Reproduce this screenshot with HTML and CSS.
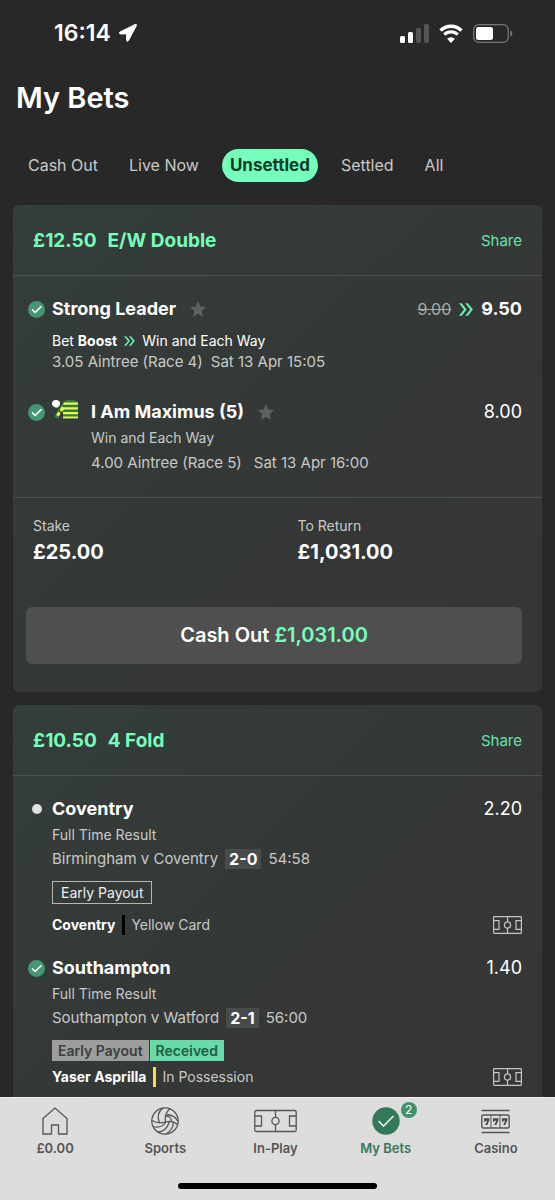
FILE: index.html
```html
<!DOCTYPE html>
<html lang="en">
<head>
<meta charset="utf-8">
<meta name="viewport" content="width=device-width, initial-scale=1">
<title>My Bets</title>
<link rel="stylesheet" href="styles.css">
</head>
<body>
<svg class="defs" aria-hidden="true">
  <symbol id="tick" viewBox="0 0 17 17"><circle cx="8.500" cy="8.500" r="8.500" fill="#459673"/><path d="M4 8.400l3.100 3.100 6.300-6.100" fill="none" stroke="#fff" stroke-width="1.500"/></symbol>
  <symbol id="star" viewBox="0 0 16 16"><path d="M8 0l2.300 5.400 5.700.6-4.300 3.900L13 16l-5-3.200L3 16l1.300-6.100L0 6l5.700-.6z" fill="#5f6261"/></symbol>
  <symbol id="boost" viewBox="0 0 14 13"><path d="M0 .3h2.700l5 6.200-5 6.200H0l5-6.200zM6.200.3h2.700l5 6.200-5 6.200H6.200l5-6.200z" fill="#68f0b2"/></symbol>
  <symbol id="pitch" viewBox="0 0 29 18"><g fill="none" stroke="#c4c7c6" stroke-width="1.200"><rect x=".6" y=".6" width="27.800" height="16.800" rx=".8"/><path d="M.6 4.600h5.400v8.800H.6M28.400 4.600H23v8.800h5.400M14.500.6v5.200M14.500 12.200v5.200"/><circle cx="14.500" cy="9" r="3.100"/></g></symbol>
</svg>

<header class="status">
  <div class="status-time">16:14
    <svg width="18" height="18" viewBox="0 0 18 18"><path d="M16.300.4 1 8c-1 .6-.6 1.900.4 1.900h6.200v6.300c0 1.200 1.400 1.400 1.900.4L17.400 1.500c.4-.8-.3-1.500-1.100-1.100z" fill="#fff" stroke="#fff"/></svg>
  </div>
  <div class="status-icons">
    <svg width="29" height="19" viewBox="0 0 29 19"><rect y="12" width="5" height="7" rx="1.500" fill="#fff"/><rect x="8" y="8" width="5" height="11" rx="1.500" fill="#fff"/><rect x="16" y="4" width="5" height="15" rx="1.500" fill="#555"/><rect x="24" width="5" height="19" rx="1.500" fill="#555"/></svg>
    <svg width="24" height="19" viewBox="0 0 24 19"><path d="M1.500 6.500a15 15 0 0 1 21 0" fill="none" stroke="#fff" stroke-width="3.400"/><path d="M5.300 10.600a9.600 9.600 0 0 1 13.400 0" fill="none" stroke="#fff" stroke-width="3.200"/><path d="M12 19l-3.900-4.300a5.800 5.800 0 0 1 7.800 0z" fill="#fff"/></svg>
    <svg width="40" height="19" viewBox="0 0 40 19"><rect x=".7" y=".7" width="34.600" height="17.600" rx="5" fill="none" stroke="#777" stroke-width="1.300"/><rect x="3" y="3" width="17" height="13" rx="2.500" fill="#fff"/><path d="M37.300 6.500c2.700.8 2.700 5.200 0 6z" fill="#777"/></svg>
  </div>
</header>

<main class="page">
  <h1 class="title">My Bets</h1>
  <nav class="tabs" aria-label="Bet filters">
    <button class="tab">Cash Out</button>
    <button class="tab">Live Now</button>
    <button class="tab tab-active" aria-pressed="true">Unsettled</button>
    <button class="tab">Settled</button>
    <button class="tab">All</button>
  </nav>

  <article class="card">
    <header class="card-head">
      <h2 class="card-title"><span>£12.50</span><span>E/W Double</span></h2>
      <button class="share">Share</button>
    </header>
    <div class="legs legs-racing">
      <section class="leg">
        <div class="mark"><svg width="17" height="17"><use href="#tick"/></svg></div>
        <div class="leg-body">
          <div class="leg-top">
            <h3 class="name">Strong Leader <svg width="16" height="16"><use href="#star"/></svg></h3>
            <div class="odds"><s class="old">9.00</s><svg width="14" height="13"><use href="#boost"/></svg><b>9.50</b></div>
          </div>
          <p class="line boosted"><span>Bet <b>Boost</b></span><svg width="11" height="10"><use href="#boost"/></svg><span>Win and Each Way</span></p>
          <p class="event"><span>3.05 Aintree (Race 4)</span><span>Sat 13 Apr 15:05</span></p>
        </div>
      </section>
      <section class="leg">
        <div class="mark"><svg width="17" height="17"><use href="#tick"/></svg></div>
        <svg class="silk" width="26" height="20" viewBox="0 0 26 20"><path d="M11 2l4-2h7l4 2v17H11V9l-5 10-4-2z" fill="#2b7b4a"/><path d="M12 2.600h14v2.200H11zM11 7.300h15v2.200H11zM11 12h15v2.200H11zM11 16.500h15v1.700H11z" fill="#f4f43c"/><path d="M10 6l-2.300 4 2.500 2L12 9zM6.200 11.500l-2 3.500 2.600 1.500 1.700-3.300z" fill="#f4f43c"/><ellipse cx="4" cy="3.500" rx="4" ry="3.500" fill="#fff"/><path d="M2 5h5L6 7.500H3z" fill="#fff"/></svg>
        <div class="leg-body">
          <div class="leg-top">
            <h3 class="name">I Am Maximus (5) <svg width="16" height="16"><use href="#star"/></svg></h3>
            <div class="odds">8.00</div>
          </div>
          <p class="line">Win and Each Way</p>
          <p class="event event-wide"><span>4.00 Aintree (Race 5)</span><span>Sat 13 Apr 16:00</span></p>
        </div>
      </section>
    </div>
    <footer class="card-foot">
      <dl class="totals">
        <div><dt>Stake</dt><dd>£25.00</dd></div>
        <div><dt>To Return</dt><dd>£1,031.00</dd></div>
      </dl>
      <button class="cashout">Cash Out <span class="green">£1,031.00</span></button>
    </footer>
  </article>

  <article class="card card-last">
    <header class="card-head">
      <h2 class="card-title"><span>£10.50</span><span>4 Fold</span></h2>
      <button class="share">Share</button>
    </header>
    <div class="legs">
      <section class="leg">
        <div class="mark"><span class="dot"></span></div>
        <div class="leg-body">
          <div class="leg-top"><h3 class="name">Coventry</h3><div class="odds">2.20</div></div>
          <p class="line">Full Time Result</p>
          <p class="event match"><span>Birmingham v Coventry</span><b class="score">2-0</b><span>54:58</span></p>
          <div class="payout"><span class="payout-label">Early Payout</span></div>
          <div class="live"><b>Coventry</b><i class="kit kit-black"></i><span class="live-text">Yellow Card</span><svg width="29" height="18"><use href="#pitch"/></svg></div>
        </div>
      </section>
      <section class="leg">
        <div class="mark"><svg width="17" height="17"><use href="#tick"/></svg></div>
        <div class="leg-body">
          <div class="leg-top"><h3 class="name">Southampton</h3><div class="odds">1.40</div></div>
          <p class="line">Full Time Result</p>
          <p class="event match"><span>Southampton v Watford</span><b class="score">2-1</b><span>56:00</span></p>
          <div class="payout payout-paid"><span class="payout-grey">Early Payout</span><span class="payout-green">Received</span></div>
          <div class="live live-tight"><b>Yaser Asprilla</b><i class="kit kit-yellow"></i><span class="live-text">In Possession</span><svg width="29" height="18"><use href="#pitch"/></svg></div>
        </div>
      </section>
    </div>
  </article>
</main>

<footer class="bottom">
  <nav class="bar" aria-label="Main">
    <a class="item" href="#home"><svg width="26" height="28" viewBox="0 0 26 28"><path d="M1 11.500L13 1l12 10.500V27h-8.500v-9h-7v9H1z" fill="none" stroke="#555" stroke-width="1.300"/></svg>£0.00</a>
    <a class="item" href="#sports"><svg width="28" height="28" viewBox="0 0 28 28"><g fill="none" stroke="#555" stroke-width="1.300"><circle cx="14" cy="14" r="13.200"/><path d="M14.500 15C13.500 9.500 15 5 19 1.800M14.500 15c-5 1.500-9.500 1-13.500-1.500M14.500 15c4.500-1.500 8.500-.5 12 2.500M8.500 15.500C6 10 7.500 4.500 12 1M16 7.500c5 .5 9 3 11 7M20.500 14.500C20.500 11.500 18.500 9 15 9M2 19.500c5 1.500 9.500.5 13-4.500M6.500 25c5.500 0 9.500-2.500 12-10.500M15 27c4.500-2.500 7-6 7.500-12"/></g></svg>Sports</a>
    <a class="item" href="#inplay"><svg width="43" height="28" viewBox="0 0 43 28"><g fill="none" stroke="#555" stroke-width="1.300"><rect x=".8" y="3.500" width="41.400" height="21" rx="1.500"/><path d="M.8 9H7.500v10H.8M42.200 9h-6.700v10h6.700M21.500 3.500v7M21.500 17.500v7"/><circle cx="21.500" cy="14" r="3.600"/></g></svg>In-Play</a>
    <a class="item item-on" href="#mybets" aria-current="page"><span class="item-icon"><svg width="28" height="28" viewBox="0 0 28 28"><circle cx="14" cy="14" r="13.700" fill="#34795a"/><path d="M6.500 14l5 5L21.500 9" fill="none" stroke="#e8eeeb" stroke-width="1.600"/></svg><span class="count">2</span></span>My Bets</a>
    <a class="item" href="#casino"><svg width="29" height="28" viewBox="0 0 29 28"><g fill="none" stroke="#555" stroke-width="1.400"><path d="M.5 3.500h28M.5 25.500h28"/><rect x=".8" y="8" width="27.400" height="13" rx="1.500"/><path d="M10 8v13M19 8v13" stroke-width="1"/></g><path id="seven" d="M3 11.300h5.500v1.800L6.300 18H4.200l2.100-4.300H4.600l-.4 1H3z" fill="#484848"/><use href="#seven" x="9"/><use href="#seven" x="18"/></svg>Casino</a>
  </nav>
  <div class="home-bar"></div>
</footer>
</body>
</html>
```
FILE: styles.css
```css
* { box-sizing: border-box; margin: 0; padding: 0; }

body {
  min-height: 100vh;
  display: flex;
  flex-direction: column;
  background: #282828;
  color: #fff;
  font-family: Inter, "Liberation Sans", sans-serif;
  font-size: 14px;
  line-height: 20px;
}

button { border: 0; background: none; color: inherit; font: inherit; cursor: pointer; }
svg { display: block; flex: none; }
.defs { position: absolute; width: 0; height: 0; }

.status {
  display: flex;
  align-items: center;
  justify-content: space-between;
  padding: 18px 42px 0 54px;
}
.status-time {
  display: flex;
  align-items: center;
  gap: 8px;
  font-size: 23px;
  font-weight: 600;
  line-height: 30px;
}
.status-icons { display: flex; align-items: center; gap: 10px; }

.page { flex: 1; display: flex; flex-direction: column; padding: 0 13px; }
.title { margin: 32px 3px 0; font-size: 29px; font-weight: 600; line-height: 36px; }

.tabs { display: flex; gap: 15px; margin: 33px 0 23px; padding-left: 7px; }
.tab {
  padding: 0 8px;
  border-radius: 17px;
  color: #c8c8c8;
  font-size: 16px;
  line-height: 33px;
}
.tab-active { background: #75ffba; color: #0c3d2a; font-size: 17px; font-weight: 700; }

.card {
  margin-bottom: 13px;
  border-radius: 6px;
  background: linear-gradient(135deg, #343e3a 0%, #343837 50%, #363636 85%);
}
.card-last { flex: 1; margin-bottom: 0; border-radius: 6px 6px 0 0; }
.card-head {
  display: flex;
  align-items: center;
  justify-content: space-between;
  height: 71px;
  padding: 2px 20px 0;
  border-bottom: 1px solid #4a504e;
}
.card-title {
  display: flex;
  gap: 11px;
  color: #75ffba;
  font-size: 19px;
  font-weight: 700;
  line-height: 24px;
}
.share { color: #68e3ab; font-size: 15px; }

.legs { display: grid; gap: 21px; padding: 21px 20px 10px 15px; }
.legs-racing { gap: 28px; padding-bottom: 24px; }
.leg { display: flex; }
.mark {
  flex: none;
  display: flex;
  align-items: center;
  justify-content: center;
  width: 17px;
  height: 24px;
  margin-right: 7px;
}
.dot { width: 10px; height: 10px; border-radius: 50%; background: #e0e0e0; }
.silk { margin-right: 13px; }
.leg-body { flex: 1; min-width: 0; }
.leg-top { display: flex; justify-content: space-between; line-height: 24px; }
.name { display: flex; align-items: center; gap: 14px; font-size: 18px; font-weight: 700; }
.odds { display: flex; align-items: center; gap: 8px; font-size: 18px; }
.old { color: #a9abaa; font-size: 16px; }
.line { margin-top: 4px; color: #c8cac9; }
.boosted { display: flex; align-items: center; gap: 7px; margin-top: 10px; color: #fff; }
.event { display: flex; gap: 8px; margin-top: 4px; color: #c8cac9; font-size: 15px; }
.boosted + .event { margin-top: 1px; }
.event-wide { gap: 12px; margin-top: 5px; }
.match { align-items: center; gap: 7px; }
.score { padding: 0 4px; background: #474b4a; color: #fff; font-size: 16px; font-weight: 700; line-height: 20px; }

.payout { display: flex; margin-top: 12px; color: #f0f0f0; line-height: 21px; }
.payout-label { padding: 0 8px; border: 1px solid #b5b7b6; }
.payout-paid { gap: 1px; font-weight: 600; }
.payout-grey { padding: 0 6px; background: #9c9e9d; color: #3b3f3d; }
.payout-green { padding: 0 6px; background: #66dba9; color: #235b43; }

.live { display: flex; align-items: center; margin-top: 11px; }
.live-tight { margin-top: 6px; }
.kit { width: 3px; height: 20px; margin: 0 6px 0 7px; }
.kit-black { background: #000; }
.kit-yellow { background: #fbdc48; }
.live-text { flex: 1; color: #c8cac9; }

.card-foot { padding: 18px 20px 28px 13px; border-top: 1px solid #4a504e; }
.totals { display: grid; grid-template-columns: 1fr 1fr; gap: 40px; padding-left: 7px; }
.totals dt { color: #c8cac9; }
.totals dd { margin-top: 4px; font-size: 20px; font-weight: 700; line-height: 24px; }
.cashout {
  width: 100%;
  margin-top: 43px;
  border-radius: 6px;
  background: #4f4f4f;
  font-size: 20px;
  font-weight: 600;
  line-height: 57px;
}
.green { color: #75ffba; }

.bottom { padding: 9px 0 11px; border-top: 1px solid #eee; background: #ddd; }
.bar { display: grid; grid-template-columns: repeat(5, 1fr); padding-right: 4px; }
.item {
  display: flex;
  flex-direction: column;
  align-items: center;
  gap: 3px;
  color: #555;
  font-size: 13px;
  font-weight: 600;
  text-decoration: none;
}
.item-on { color: #34795a; }
.item-icon { position: relative; }
.count {
  position: absolute;
  top: -5px;
  right: -17px;
  width: 16px;
  height: 16px;
  border-radius: 50%;
  background: #3f936b;
  color: #fff;
  font-size: 12px;
  font-weight: 400;
  line-height: 16px;
  text-align: center;
}
.home-bar { width: 36%; height: 6px; margin: 25px auto 0; border-radius: 3px; background: #000; }
```
